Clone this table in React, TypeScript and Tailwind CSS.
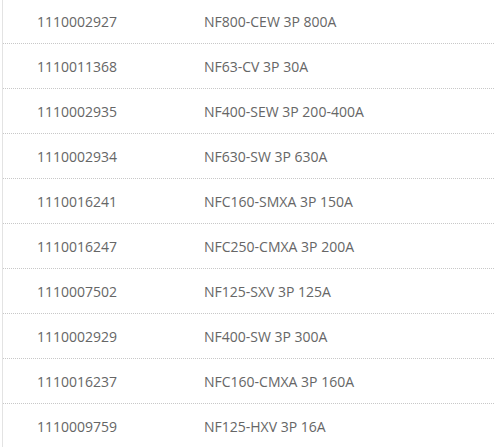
const rows = [
  ["1110002927", "NF800-CEW 3P 800A"],
  ["1110011368", "NF63-CV 3P 30A"],
  ["1110002935", "NF400-SEW 3P 200-400A"],
  ["1110002934", "NF630-SW 3P 630A"],
  ["1110016241", "NFC160-SMXA 3P 150A"],
  ["1110016247", "NFC250-CMXA 3P 200A"],
  ["1110007502", "NF125-SXV 3P 125A"],
  ["1110002929", "NF400-SW 3P 300A"],
  ["1110016237", "NFC160-CMXA 3P 160A"],
  ["1110009759", "NF125-HXV 3P 16A"],
];

export default function App() {
  return (
    <div className="h-[447px] w-[494px] overflow-hidden bg-white">
      <div
        className="ml-[2px] -mt-px border-l border-[#e3e3e3] text-[14px] text-[#666]"
        style={{ fontFamily: '"Open Sans", "Noto Sans", sans-serif' }}
      >
        {rows.map(([code, name]) => (
          <div
            key={code}
            className="flex h-[45px] items-center border-b border-dotted border-[#c8c8c8] pl-[34px]"
          >
            <span className="w-[167px]">{code}</span>
            <span>{name}</span>
          </div>
        ))}
      </div>
    </div>
  );
}
